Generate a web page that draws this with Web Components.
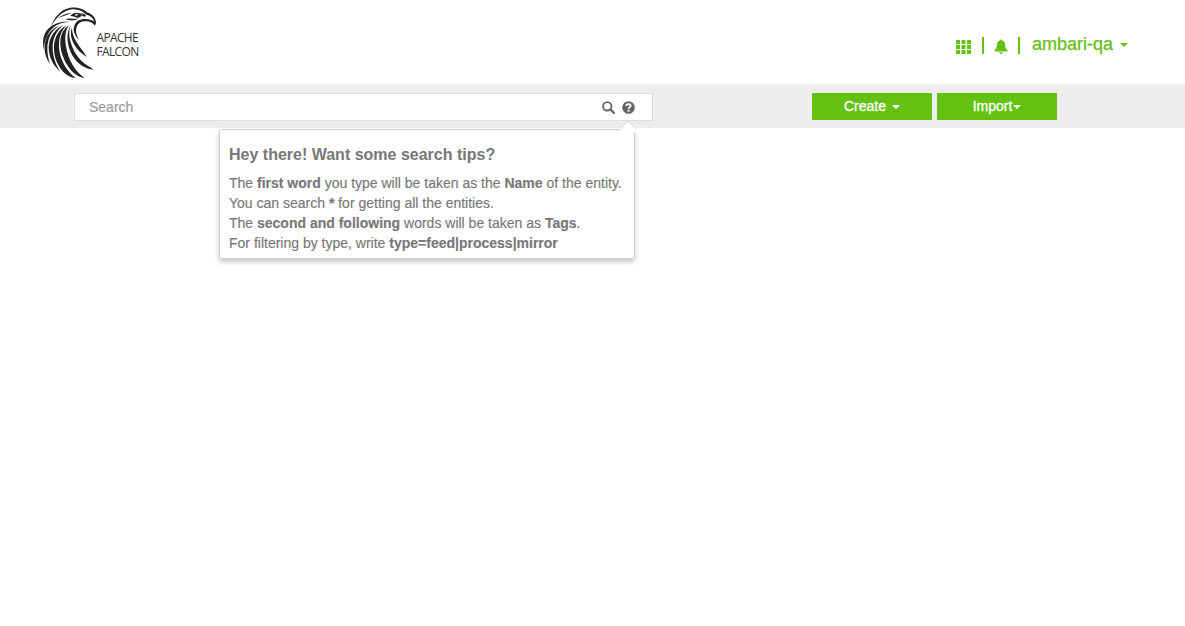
<!DOCTYPE html>
<html lang="en">
<head>
<meta charset="utf-8">
<title>Apache Falcon</title>
<style>
body{margin:0;background:#fff;font:14px/20px "Liberation Sans",Arial,sans-serif;color:#777}
</style>
</head>
<body>
<falcon-app></falcon-app>
<script>
const define=(name,html)=>{
  const t=document.createElement('template');t.innerHTML=html;
  customElements.define(name,class extends HTMLElement{
    constructor(){super();this.attachShadow({mode:'open'}).append(t.content.cloneNode(true));}
  });
};

define('caret-down',`<style>:host{display:inline-block;width:0;height:0;border:4px solid transparent;border-top-color:currentColor;border-bottom:0;flex:none}</style>`);

define('falcon-logo',`<style>
:host{display:flex;align-items:flex-start;height:84px}
svg{display:block;width:60px;height:84px;flex:none}
.name{margin:31px 0 0 .5px;font:12px/14px "Open Sans","Noto Sans",sans-serif;font-weight:400;color:#333;width:44px;letter-spacing:-.65px}
</style>
<svg viewBox="0 0 180 252" fill="#222">
<path d="M45 80C54 52 74 28 103 23C128 20 145 29 155 38C170 42 180 54 180 70L176 77C168 65 157 64 146 64C134 64 124 72 121 84C118 96 122 108 129 119C116 107 110 91 115 77C120 62 134 56 149 57C160 57 168 60 174 65C172 54 165 47 151 44C141 34 127 27 108 28C81 32 61 51 45 80Z"/>
<path d="M66 55C81 43 94 39 107 40C94 43 81 49 66 55ZM103 47C110 39 121 36 130 40L143 41C149 42 151 46 147 50L136 47C132 54 122 55 116 50L103 47ZM88 58C99 53 111 58 127 56C116 63 102 62 88 58Z"/>
<path fill="#fff" d="M118 43L126 42L123 47L116 46ZM134 43L142 45L137 46Z"/>
<path d="M103 66C75 65 49 78 36 102C27 119 23 134 24 149C17 123 23 100 38 85C54 69 79 62 103 66Z"/>
<path d="M73 76C48 88 34 116 34 145C34 162 37 178 42 192C26 170 21 141 30 117C38 97 54 82 73 76Z"/>
<path d="M82 76C59 94 49 119 50 146C51 173 61 198 74 216C51 197 38 171 38 141C39 113 56 87 82 76Z"/>
<path d="M92 76C74 94 68 116 69 141C71 177 89 211 119 234C105 233 93 227 82 216C61 193 52 164 54 136C57 109 69 88 92 76Z"/>
<path d="M98 76C87 95 86 115 90 139C97 181 117 214 146 234C126 232 107 218 94 196C79 172 70 142 74 115C77 98 85 85 98 76Z"/>
<path d="M104 75C97 95 99 111 105 130C115 164 138 190 165 203C168 206 171 207 173 209C150 208 124 192 110 168C95 142 87 105 104 75Z"/>
<path d="M108 83C108 103 117 119 127 134C137 149 146 159 153 171C139 162 126 152 117 137C106 120 101 99 108 83Z"/>
</svg><div class="name">APACHE FALCON</div>`);

define('user-nav',`<style>
:host{display:flex;color:#64c110;height:84px}
.grid{width:15px;height:14px;margin:40px 11px 0 0}
.bell{width:14px;height:15px;margin:39px 10px 0}
i{width:2px;height:17px;background:currentColor;margin-top:37px}
.user{font-size:18px;line-height:20px;margin:34px 7px 0 12px;-webkit-text-stroke:.25px}
caret-down{margin-top:43px}
svg{display:block}
</style>
<svg class="grid" viewBox="0 0 15 14" fill="currentColor"><path d="M0 0h4v4H0zM5.5 0h4v4h-4zM11 0h4v4h-4zM0 5h4v4H0zM5.5 5h4v4h-4zM11 5h4v4h-4zM0 10h4v4H0zM5.5 10h4v4h-4zM11 10h4v4h-4z"/></svg>
<i></i>
<svg class="bell" viewBox="0 0 14 15" fill="currentColor"><path d="M6.2 1.2V.7Q7 -.4 7.8.7v.5C10.3 1.7 11 3.6 11.2 6.2C11.4 8.7 12 9.8 13.5 11V12.5H.5V11C2 9.8 2.6 8.7 2.8 6.2C3 3.6 3.7 1.7 6.2 1.2ZM5 13.2H9Q8.5 15 7 15T5 13.2Z"/></svg>
<i></i><span class="user"><slot></slot></span><caret-down></caret-down>`);

define('site-header',`<style>:host{display:flex;justify-content:space-between;height:84px;padding:0 57px 0 36px}</style><falcon-logo></falcon-logo><user-nav>ambari-qa</user-nav>`);

define('green-button',`<style>
:host{display:flex;box-sizing:border-box;width:120px;height:27px;align-items:center;justify-content:center;background:#64c110;color:#fff;line-height:27px;-webkit-text-stroke:.3px}
caret-down{margin-left:var(--gap,0px);margin-top:1px}
</style><span><slot></slot></span><caret-down></caret-down>`);

define('search-tips',`<style>
:host{display:block;box-sizing:border-box;width:416px;height:130px;background:#fff;border:1px solid #d0d0d0;border-radius:3px;box-shadow:0 3px 5px rgba(0,0,0,.22);padding:15px 9px 0;color:#777}
h4{margin:0 0 8px;font-size:16px;line-height:20px;font-weight:700}
p{margin:0;white-space:nowrap;-webkit-text-stroke:.15px}
svg{position:absolute;right:-5px;top:-10px;width:22px;height:12px;display:block}
</style>
<svg viewBox="0 0 22 12"><path d="M0 12V11L11 1L22 11V12Z" fill="#fff"/><path d="M0 10.5H1L11 1L20 9.5" fill="none" stroke="#d4d4d4"/></svg>
<h4>Hey there! Want some search tips?</h4>
<p>The <b>first word</b> you type will be taken as the <b>Name</b> of the entity.</p>
<p>You can search <b>*</b> for getting all the entities.</p>
<p>The <b>second and following</b> words will be taken as <b>Tags</b>.</p>
<p>For filtering by type, write <b>type=feed|process|mirror</b></p>`);

define('search-box',`<style>
:host{display:flex;position:relative;box-sizing:border-box;width:579px;height:28px;background:#fff;border:1px solid #ddd;align-items:center;padding:0 17px 0 14px;color:#999}
.ph{flex:1;line-height:26px;-webkit-text-stroke:.15px}
svg{display:block;flex:none}
.q{margin-left:7px}
search-tips{position:absolute;left:144px;top:35px}
</style><span class="ph">Search</span>
<svg width="13" height="13" viewBox="0 0 13 13" fill="none" stroke="#666"><circle cx="5.3" cy="5.3" r="4.2" stroke-width="1.9"/><path d="M8.5 8.5L12 12" stroke-width="2.4" stroke-linecap="round"/></svg>
<svg class="q" width="13" height="13" viewBox="0 0 13 13"><circle cx="6.5" cy="6.5" r="6.3" fill="#666"/><path d="M4.4 4.9C4.4 2.5 8.7 2.5 8.7 4.8C8.7 6.3 6.6 6.2 6.6 7.9" fill="none" stroke="#fff" stroke-width="1.8"/><path d="M5.6 8.9h2v1.8h-2z" fill="#fff"/></svg>
<search-tips></search-tips>`);

define('tool-bar',`<style>
:host{display:flex;box-sizing:border-box;height:44px;background:#ededed;padding:9px 128px 0 74px;justify-content:space-between;align-items:flex-start}
.actions{display:flex;gap:5px}
</style><search-box></search-box><div class="actions"><green-button style="--gap:6px">Create</green-button><green-button style="--gap:1px">Import</green-button></div>`);

define('falcon-app',`<style>:host{display:block;height:626px;overflow:hidden;background:#fff}</style><site-header></site-header><tool-bar></tool-bar>`);
</script>
</body>
</html>
